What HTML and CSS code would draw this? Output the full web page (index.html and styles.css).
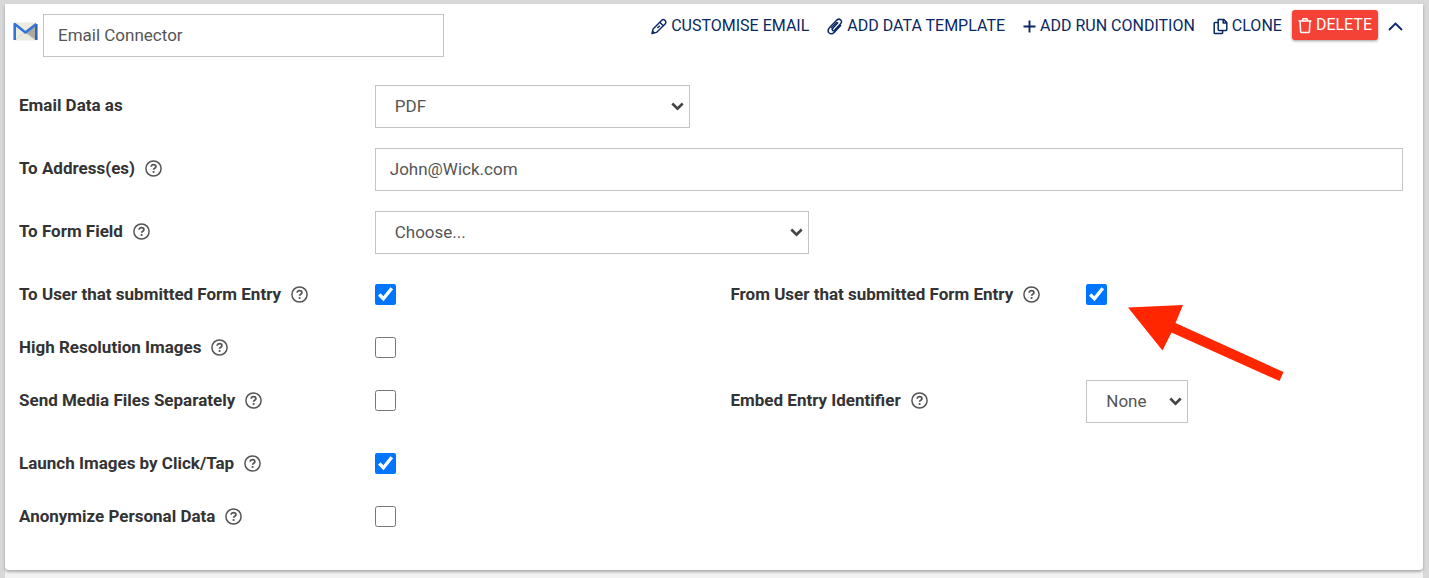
FILE: index.html
```
<!DOCTYPE html>
<html lang="en">
<head>
    <meta charset="UTF-8">
    <meta name="viewport" content="width=device-width, initial-scale=1.0">
    <title>Email Connector</title>
    <link rel="stylesheet" href="styles.css">
</head>
<body>
    <!-- shared help icon -->
    <svg class="sprite" aria-hidden="true">
        <symbol id="help" viewBox="0 0 17 17">
            <circle cx="8.5" cy="8.5" r="7.6" fill="none" stroke="currentColor" stroke-width="1.5"/>
            <path d="M6.2 6.8C6.2 5.5 7.2 4.7 8.6 4.7S10.9 5.5 10.9 6.7C10.9 8.2 8.6 8.2 8.6 9.8" fill="none" stroke="currentColor" stroke-width="1.7"/>
            <circle cx="8.6" cy="12" r="1.1" fill="currentColor"/>
        </symbol>
    </svg>

    <div class="page">
        <form class="connector">
            <header class="connector-header">
                <svg class="mail-icon" viewBox="0 0 25 19" aria-hidden="true">
                    <rect x="1" y="0.5" width="23" height="18" rx="1" fill="#ecebdf"/>
                    <path d="M12.5 10.5L22.5 3V18z" fill="#a9aaa2"/>
                    <path d="M3 17.5L12 10.5L22 18" fill="none" stroke="#d5d4c8" stroke-width="0.8"/>
                    <path d="M23.3 2V18" fill="none" stroke="#3b62a5" stroke-width="2.6"/>
                    <path d="M1.7 18V2L12.5 10.5L23.3 2" fill="none" stroke="#3274d8" stroke-width="2.6" stroke-linejoin="round"/>
                </svg>
                <input type="text" class="field name-field" aria-label="Connector name" value="Email Connector">

                <div class="actions">
                    <button type="button" class="action">
                        <svg width="16" height="17" viewBox="0 0 17 17" aria-hidden="true">
                            <path d="M1 16L2.2 11.2L11.2 2Q13 0.2 14.9 2.1Q16.8 4 15 5.8L5.8 14.8z M9.4 4L13 7.6M6.8 10.2L9.4 7.6" fill="none" stroke="currentColor" stroke-width="1.5" stroke-linejoin="round"/>
                            <path d="M1 16L1.8 12.6L4.4 15.2z" fill="currentColor"/>
                        </svg>
                        CUSTOMISE EMAIL
                    </button>
                    <button type="button" class="action">
                        <svg width="16" height="17" viewBox="0 0 16 17" aria-hidden="true">
                            <path d="M10.6 5L5.8 10.2Q4.6 11.6 5.6 12.4Q6.6 13.2 7.8 12L13.4 6Q15.6 3.6 13.6 1.8Q11.6 0.2 9.4 2.4L2.6 9.6Q-0.2 12.8 2.2 15Q4.6 17 7.4 14.2L13.6 7.6" fill="none" stroke="currentColor" stroke-width="1.5" stroke-linecap="round"/>
                            <path d="M10.6 5Q9.6 4.2 8.4 5.6L4.4 9.8" fill="none" stroke="currentColor" stroke-width="1.2" stroke-linecap="round"/>
                        </svg>
                        ADD DATA TEMPLATE
                    </button>
                    <button type="button" class="action">
                        <svg width="13" height="13" viewBox="0 0 13 13" aria-hidden="true">
                            <path d="M6.5 0.5V12.5M0.5 6.5H12.5" stroke="currentColor" stroke-width="1.9"/>
                        </svg>
                        ADD RUN CONDITION
                    </button>
                    <button type="button" class="action">
                        <svg width="15" height="17" viewBox="0 0 15 17" aria-hidden="true">
                            <path d="M5.2 1.4H10.6L13.8 4.6V11.6Q13.8 12.4 13 12.4H6Q5.2 12.4 5.2 11.6z M10.2 1.6V5H13.6M5 4.4H2Q1.2 4.4 1.2 5.2V14.8Q1.2 15.6 2 15.6H8.8Q9.6 15.6 9.6 14.8V12.6" fill="none" stroke="currentColor" stroke-width="1.5" stroke-linejoin="round"/>
                        </svg>
                        CLONE
                    </button>
                    <button type="button" class="delete">
                        <svg width="14" height="17" viewBox="0 0 15 17" aria-hidden="true">
                            <path d="M0.5 3.8H14.5M4.4 3.6L5.4 1.2H9.6L10.6 3.6M2.2 4L2.8 15Q2.9 16 3.8 16H11.2Q12.1 16 12.2 15L12.8 4" fill="none" stroke="currentColor" stroke-width="1.6" stroke-linejoin="round"/>
                        </svg>
                        DELETE
                    </button>
                    <button type="button" class="collapse" aria-label="Collapse">
                        <svg width="15" height="9" viewBox="0 0 15 9" aria-hidden="true">
                            <path d="M1 8L7.5 1.5L14 8" fill="none" stroke="currentColor" stroke-width="1.8"/>
                        </svg>
                    </button>
                </div>
            </header>

            <div class="rows">
                <div class="row">
                    <div class="label"><label for="format">Email Data as</label></div>
                    <div class="control">
                        <select id="format" class="field format">
                            <option>PDF</option>
                        </select>
                    </div>
                </div>

                <div class="row">
                    <div class="label">
                        <label for="to">To Address(es)</label>
                        <svg class="help"><use href="#help"/></svg>
                    </div>
                    <div class="control wide">
                        <input type="text" id="to" class="field full" value="John@Wick.com">
                    </div>
                </div>

                <div class="row">
                    <div class="label">
                        <label for="to-field">To Form Field</label>
                        <svg class="help"><use href="#help"/></svg>
                    </div>
                    <div class="control wide">
                        <select id="to-field" class="field form-field">
                            <option>Choose...</option>
                        </select>
                    </div>
                </div>

                <div class="row">
                    <div class="label">
                        <label for="to-user">To User that submitted Form Entry</label>
                        <svg class="help"><use href="#help"/></svg>
                    </div>
                    <div class="control"><input type="checkbox" id="to-user" checked></div>
                    <div class="label">
                        <label for="from-user">From User that submitted Form Entry</label>
                        <svg class="help"><use href="#help"/></svg>
                    </div>
                    <div class="control">
                        <input type="checkbox" id="from-user" checked>
                        <svg class="pointer" width="156" height="76" viewBox="0 0 156 76" aria-hidden="true">
                            <path d="M0 2.5L55 0L47.5 18L155.5 67L151.5 76L43.5 27.5L34.5 45.5z" fill="#ff2600"/>
                        </svg>
                    </div>
                </div>

                <div class="row">
                    <div class="label">
                        <label for="high-res">High Resolution Images</label>
                        <svg class="help"><use href="#help"/></svg>
                    </div>
                    <div class="control"><input type="checkbox" id="high-res"></div>
                </div>

                <div class="row">
                    <div class="label">
                        <label for="media">Send Media Files Separately</label>
                        <svg class="help"><use href="#help"/></svg>
                    </div>
                    <div class="control"><input type="checkbox" id="media"></div>
                    <div class="label">
                        <label for="identifier">Embed Entry Identifier</label>
                        <svg class="help"><use href="#help"/></svg>
                    </div>
                    <div class="control">
                        <select id="identifier" class="field identifier">
                            <option>None</option>
                        </select>
                    </div>
                </div>

                <div class="row">
                    <div class="label">
                        <label for="launch">Launch Images by Click/Tap</label>
                        <svg class="help"><use href="#help"/></svg>
                    </div>
                    <div class="control"><input type="checkbox" id="launch" checked></div>
                </div>

                <div class="row">
                    <div class="label">
                        <label for="anonymize">Anonymize Personal Data</label>
                        <svg class="help"><use href="#help"/></svg>
                    </div>
                    <div class="control"><input type="checkbox" id="anonymize"></div>
                </div>
            </div>
        </form>
    </div>
</body>
</html>
```
FILE: styles.css
```
* {
    box-sizing: border-box;
}

body {
    margin: 0;
    padding: 4px 6px 0 5px;
    min-height: 100vh;
    display: flex;
    background: #d8d8d8;
    font-family: Roboto, Arial, sans-serif;
    font-size: 17px;
    color: #333;
}

.sprite {
    position: absolute;
    width: 0;
    height: 0;
}

.page {
    flex: 1;
    background: #f3f3f3;
}

.connector {
    background: #fff;
    border-radius: 0 0 4px 4px;
    padding: 6px 20px 41px 14px;
    box-shadow: 0 2px 3px rgba(0, 0, 0, 0.3);
}

/* header */
.connector-header {
    display: flex;
    align-items: flex-start;
    margin-bottom: 28px;
}

.mail-icon {
    width: 25px;
    height: 19px;
    margin: 12px 5px 0 -6px;
}

.name-field {
    width: 401px;
    margin-top: 4px;
}

.actions {
    display: flex;
    align-items: center;
    margin-left: auto;
}

.actions button {
    display: flex;
    align-items: center;
    gap: 4px;
    padding: 2px 0 0;
    border: none;
    background: none;
    color: #0a2863;
    font-family: inherit;
    font-size: 16px;
    line-height: 20px;
    cursor: pointer;
}

.actions .action {
    margin-right: 18px;
}

.actions .delete {
    height: 30px;
    margin: 0 10px 0 -8px;
    padding: 0 6px;
    border-radius: 3px;
    background: #f44336;
    color: #fff;
    box-shadow: 0 1px 3px rgba(0, 0, 0, 0.4);
}

/* form rows */
.rows {
    display: flex;
    flex-direction: column;
    gap: 20px;
}

.row {
    display: grid;
    grid-template-columns: repeat(4, 1fr);
    column-gap: 39px;
    align-items: start;
    min-height: 33px;
}

.label {
    display: flex;
    align-items: center;
    gap: 10px;
    padding-top: 9px;
    line-height: 22px;
    font-weight: bold;
    white-space: nowrap;
}

.help {
    flex: none;
    width: 17px;
    height: 17px;
    color: #555;
}

.control {
    position: relative;
    display: flex;
}

.wide {
    grid-column: span 3;
}

.field {
    height: 43px;
    padding: 0 14px 2px;
    border: 1px solid #c4c4c4;
    border-radius: 0;
    background: #fff;
    color: #555;
    font-family: inherit;
    font-size: 17px;
}

select.field {
    appearance: none;
    padding: 0 22px 2px 19px;
    background: #fff url("data:image/svg+xml,%3Csvg xmlns='http://www.w3.org/2000/svg' width='13' height='9'%3E%3Cpath d='M1.3 1.5L6.5 6.7L11.7 1.5' fill='none' stroke='%23444' stroke-width='2.6'/%3E%3C/svg%3E") no-repeat right 5px center;
}

.full {
    width: 100%;
}

.format {
    width: 315px;
}

.form-field {
    width: 434px;
}

.identifier {
    width: 102px;
}

input[type="checkbox"] {
    width: 21px;
    height: 21px;
    margin: 10px 0 0;
}

.pointer {
    position: absolute;
    left: 42px;
    top: 31px;
}
```
